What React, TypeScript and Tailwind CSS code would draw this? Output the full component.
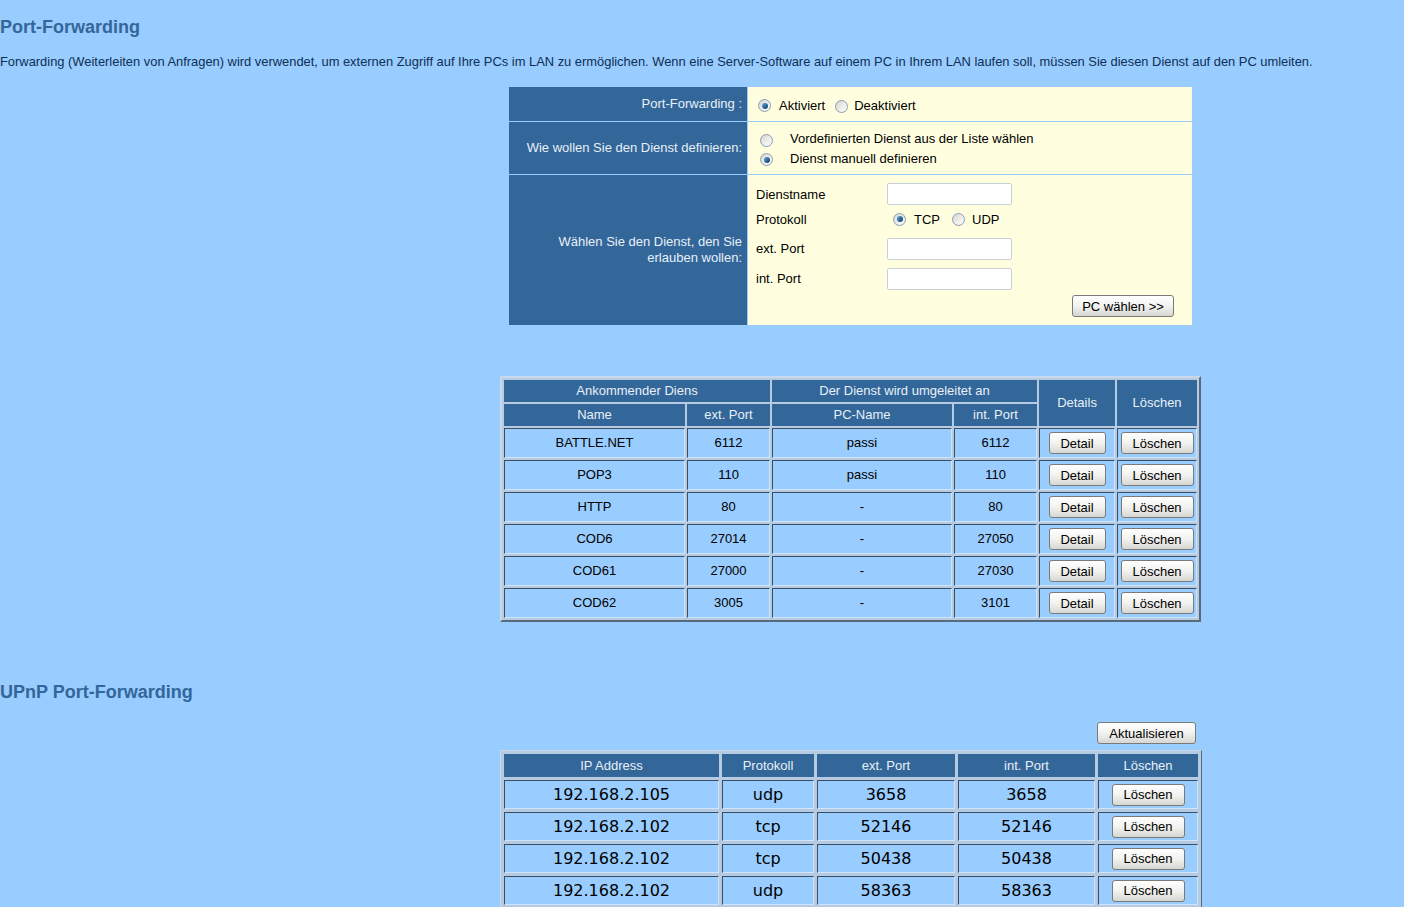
import React from "react";

const font = { fontFamily: '"Liberation Sans", Arial, sans-serif' };

function Radio({ checked }: { checked?: boolean }) {
  return (
    <span className="inline-flex w-[13px] h-[13px] rounded-full border border-[#8b9cb0] bg-linear-to-br from-[#d6d6d0] to-white items-center justify-center align-middle shrink-0">
      {checked && (
        <span className="w-[6px] h-[6px] rounded-full bg-linear-to-br from-[#5aa8dc] to-[#0c3a66]" />
      )}
    </span>
  );
}

function Btn({ children, className = "" }: { children: React.ReactNode; className?: string }) {
  return (
    <button
      className={
        "inline-flex items-center justify-center h-[22px] rounded-[3px] border border-[#7a7a7a] bg-linear-to-b from-white via-[#f2f2f0] to-[#d6d6d2] text-[13px] text-black leading-none " +
        className
      }
    >
      {children}
    </button>
  );
}

function Input() {
  return <div className="w-[125px] h-[22px] bg-white border border-[#c8d0d8] rounded-[2px]" />;
}

const fwd = [
  ["BATTLE.NET", "6112", "passi", "6112"],
  ["POP3", "110", "passi", "110"],
  ["HTTP", "80", "-", "80"],
  ["COD6", "27014", "-", "27050"],
  ["COD61", "27000", "-", "27030"],
  ["COD62", "3005", "-", "3101"],
];

const upnp = [
  ["192.168.2.105", "udp", "3658", "3658"],
  ["192.168.2.102", "tcp", "52146", "52146"],
  ["192.168.2.102", "tcp", "50438", "50438"],
  ["192.168.2.102", "udp", "58363", "58363"],
];

const th = "bg-[#336699] text-[#e8f0f8] text-[13px] font-normal text-center p-0";
const td =
  "border-t border-l border-t-[#3c4c64] border-l-[#3c4c64] border-b border-r border-b-[#d0e4f8] border-r-[#d0e4f8] text-center text-[13px] text-black p-0";

export default function App() {
  return (
    <div className="min-h-[907px] w-[1404px] bg-[#99ccff] overflow-hidden" style={font}>
      <h1 className="pt-[15px] text-[18px] leading-[24px] font-bold text-[#336699]">Port-Forwarding</h1>
      <p className="mt-[16px] text-[12.9px] leading-[14px] text-[#0d2f55] whitespace-nowrap">
        Forwarding (Weiterleiten von Anfragen) wird verwendet, um externen Zugriff auf Ihre PCs im LAN zu ermöglichen. Wenn eine Server-Software auf einem PC in Ihrem LAN laufen soll, müssen Sie diesen Dienst auf den PC umleiten.
      </p>

      <table className="ml-[508px] mt-[17px] w-[685px] border-separate border-spacing-[1px] table-fixed">
        <colgroup>
          <col className="w-[238px]" />
          <col />
        </colgroup>
        <tbody>
          <tr className="h-[34px]">
            <td className="bg-[#336699] text-[#e8f0f8] text-[13px] text-right pr-[5px]">Port-Forwarding :</td>
            <td className="bg-[#ffffe0] text-[13px] text-black pl-[10px] pt-[3px]">
              <div className="flex items-center">
                <Radio checked />
                <span className="ml-[8px]">Aktiviert</span>
                <span className="ml-[10px]"><Radio /></span>
                <span className="ml-[6px]">Deaktiviert</span>
              </div>
            </td>
          </tr>
          <tr className="h-[52px]">
            <td className="bg-[#336699] text-[#e8f0f8] text-[13px] text-right pr-[5px]">Wie wollen Sie den Dienst definieren:</td>
            <td className="bg-[#ffffe0] text-[13px] text-black pl-[12px]">
              <div className="flex items-center h-[18px] mt-[4px]">
                <Radio />
                <span className="ml-[17px] -mt-[3px]">Vordefinierten Dienst aus der Liste wählen</span>
              </div>
              <div className="flex items-center h-[18px] mt-[1px]">
                <Radio checked />
                <span className="ml-[17px] -mt-[2px]">Dienst manuell definieren</span>
              </div>
            </td>
          </tr>
          <tr className="h-[150px]">
            <td className="bg-[#336699] text-[#e8f0f8] text-[13px] text-right pr-[5px] leading-[16px]">
              Wählen Sie den Dienst, den Sie
              <br />
              erlauben wollen:
            </td>
            <td className="bg-[#ffffe0] text-[13px] text-black pl-[8px] pr-[18px] align-top">
              <div className="pt-[8px] flex flex-col">
                <div className="flex items-center h-[22px]">
                  <span className="w-[131px] mt-[2px]">Dienstname</span>
                  <Input />
                </div>
                <div className="flex items-center h-[26px] mt-[1px]">
                  <span className="w-[137px] mt-[2px]">Protokoll</span>
                  <Radio checked />
                  <span className="ml-[8px] mt-[2px]">TCP</span>
                  <span className="ml-[12px]"><Radio /></span>
                  <span className="ml-[7px] mt-[2px]">UDP</span>
                </div>
                <div className="flex items-center h-[22px] mt-[6px]">
                  <span className="w-[131px]">ext. Port</span>
                  <Input />
                </div>
                <div className="flex items-center h-[22px] mt-[8px]">
                  <span className="w-[131px]">int. Port</span>
                  <Input />
                </div>
                <div className="flex justify-end mt-[5px]">
                  <Btn className="w-[102px]">PC wählen &gt;&gt;</Btn>
                </div>
              </div>
            </td>
          </tr>
        </tbody>
      </table>

      <table className="ml-[500px] mt-[50px] w-[701px] table-fixed border-separate border-spacing-[2px] bg-[#b4cbe2] border-2 border-t-[#c8d8e8] border-l-[#c8d8e8] border-b-[#5a6a7a] border-r-[#5a6a7a]">
        <colgroup>
          <col className="w-[181px]" />
          <col className="w-[83px]" />
          <col className="w-[180px]" />
          <col className="w-[83px]" />
          <col className="w-[76px]" />
          <col className="w-[80px]" />
        </colgroup>
        <thead>
          <tr className="h-[22px]">
            <th colSpan={2} className={th}>Ankommender Diens</th>
            <th colSpan={2} className={th}>Der Dienst wird umgeleitet an</th>
            <th rowSpan={2} className={th}>Details</th>
            <th rowSpan={2} className={th}>Löschen</th>
          </tr>
          <tr className="h-[22px]">
            <th className={th}>Name</th>
            <th className={th}>ext. Port</th>
            <th className={th}>PC-Name</th>
            <th className={th}>int. Port</th>
          </tr>
        </thead>
        <tbody>
          {fwd.map((r, i) => (
            <tr key={i} className="h-[30px]">
              <td className={td + " bg-[#99ccff]"}>{r[0]}</td>
              <td className={td + " bg-[#99ccff]"}>{r[1]}</td>
              <td className={td + " bg-[#99ccff]"}>{r[2]}</td>
              <td className={td + " bg-[#99ccff]"}>{r[3]}</td>
              <td className={td + " bg-[#99ccff]"}>
                <Btn className="w-[57px]">Detail</Btn>
              </td>
              <td className={td + " bg-[#99ccff]"}>
                <Btn className="w-[73px]">Löschen</Btn>
              </td>
            </tr>
          ))}
        </tbody>
      </table>

      <h2 className="mt-[58px] text-[18px] leading-[24px] font-bold text-[#336699]">UPnP Port-Forwarding</h2>

      <div className="ml-[500px] w-[700px] flex justify-end mt-[18px] pr-[4px]">
        <Btn className="w-[99px]">Aktualisieren</Btn>
      </div>

      <table className="ml-[500px] mt-[6px] w-[701px] table-fixed border-separate border-spacing-[3px] bg-[#b4cbe2] border border-t-[#c8d8e8] border-l-[#c8d8e8] border-b-[#5a6a7a] border-r-[#5a6a7a]">
        <colgroup>
          <col className="w-[215px]" />
          <col className="w-[92px]" />
          <col className="w-[138px]" />
          <col className="w-[137px]" />
          <col className="w-[100px]" />
        </colgroup>
        <thead>
          <tr className="h-[23px]">
            <th className={th}>IP Address</th>
            <th className={th}>Protokoll</th>
            <th className={th}>ext. Port</th>
            <th className={th}>int. Port</th>
            <th className={th}>Löschen</th>
          </tr>
        </thead>
        <tbody>
          {upnp.map((r, i) => (
            <tr key={i} className="h-[29px]">
              {r.map((c, j) => (
                <td
                  key={j}
                  className={td + " bg-[#99ccff] text-[16px]"}
                  style={{ fontFamily: '"DejaVu Sans", Verdana, sans-serif' }}
                >
                  {c}
                </td>
              ))}
              <td className={td + " bg-[#99ccff]"}>
                <Btn className="w-[73px]">Löschen</Btn>
              </td>
            </tr>
          ))}
        </tbody>
      </table>
    </div>
  );
}
